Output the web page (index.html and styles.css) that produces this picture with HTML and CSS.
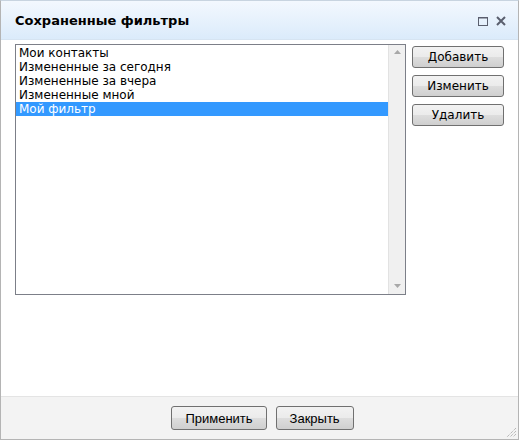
FILE: index.html
```html
<!DOCTYPE html>
<html lang="ru">
  <head>
    <meta charset="UTF-8" />
    <title>Сохраненные фильтры</title>
    <link rel="stylesheet" href="styles.css">
  </head>
  <body>
    <div class="window">
      <div class="titlebar">
        <span class="title">Сохраненные фильтры</span>
        <div class="title-tools">
          <svg width="10" height="10" viewBox="0 0 10 10"><rect x="0.5" y="1.5" width="9" height="8" fill="none" stroke="#5a5f6e" stroke-width="1"/><line x1="0" y1="2" x2="10" y2="2" stroke="#5a5f6e" stroke-width="1"/></svg>
          <svg width="10" height="10" viewBox="0 0 10 10"><path d="M1 1 L9 9 M9 1 L1 9" stroke="#5a5f6e" stroke-width="2"/></svg>
        </div>
      </div>

      <div class="content">
        <div class="listbox">
          <ul class="items">
            <li>Мои контакты</li>
            <li>Измененные за сегодня</li>
            <li>Измененные за вчера</li>
            <li>Измененные мной</li>
            <li class="selected">Мой фильтр</li>
          </ul>
          <div class="scrollbar">
            <svg width="7" height="4" viewBox="0 0 7 4"><path d="M0 4 L3.5 0 L7 4 Z" fill="#a8a8a8"/></svg>
            <svg width="7" height="4" viewBox="0 0 7 4"><path d="M0 0 L3.5 4 L7 0 Z" fill="#a8a8a8"/></svg>
          </div>
        </div>
        <div class="actions">
          <button class="btn">Добавить</button>
          <button class="btn">Изменить</button>
          <button class="btn">Удалить</button>
        </div>
      </div>

      <div class="footer">
        <button class="btn btn-footer">Применить</button>
        <button class="btn btn-footer">Закрыть</button>
        <svg class="grip" width="12" height="12" viewBox="0 0 12 12">
          <path d="M11 2 L2 11 M11 5 L5 11 M11 8 L8 11" stroke="#a0a0a0" stroke-width="1" stroke-dasharray="1 1"/>
        </svg>
      </div>
    </div>
  </body>
</html>
```

FILE: styles.css
```css
body {
  margin: 0;
  padding: 0;
  font-family: "DejaVu Sans", Verdana, sans-serif;
  background-color: #ffffff;
}

.window {
  position: relative;
  width: 519px;
  height: 440px;
  box-sizing: border-box;
  border: 1px solid #b4b4b4;
  border-top-color: #c8d4e0;
  display: flex;
  flex-direction: column;
  background-color: #ffffff;
}

.titlebar {
  height: 37px;
  padding: 1px 12px 0 14px;
  display: flex;
  align-items: center;
  justify-content: space-between;
  background: linear-gradient(#f3f8fe, #dbebfb);
  border-bottom: 1px solid #d6e4f2;
}

.title {
  font-weight: bold;
  font-size: 13px;
  color: #000000;
}

.title-tools {
  display: flex;
  gap: 8px;
  padding-top: 1px;
}

.content {
  flex: 1;
  display: flex;
  gap: 6px;
  padding: 4px 0 0 14px;
}

.listbox {
  width: 391px;
  height: 251px;
  box-sizing: border-box;
  border: 1px solid #7c7f88;
  display: flex;
}

.items {
  flex: 1;
  list-style: none;
  margin: 0;
  padding: 1px 0 0;
  font-size: 12px;
  line-height: 14px;
}

.items li {
  padding-left: 3px;
  color: #000000;
}

.items li.selected {
  background-color: #3399ff;
  color: #ffffff;
}

.scrollbar {
  width: 16px;
  background-color: #f0f0f0;
  border-left: 1px solid #e2e2e2;
  display: flex;
  flex-direction: column;
  align-items: center;
  justify-content: space-between;
  padding: 5px 0 6px;
}

.actions {
  display: flex;
  flex-direction: column;
  gap: 7px;
  padding-top: 2px;
}

.btn {
  width: 92px;
  height: 22px;
  padding: 0;
  font-family: "DejaVu Sans", Verdana, sans-serif;
  font-size: 12px;
  color: #000000;
  border: 1px solid #707070;
  border-radius: 3px;
  background: linear-gradient(#f2f2f2 0%, #ebebeb 50%, #dddddd 51%, #cfcfcf 100%);
  cursor: pointer;
}

.btn:hover {
  background: linear-gradient(#eaf6fd 0%, #d9f0fc 50%, #bee6fd 51%, #a7d9f5 100%);
}

.footer {
  height: 42px;
  border-top: 1px solid #e4e4e4;
  background-color: #f3f3f3;
  display: flex;
  align-items: center;
  justify-content: center;
  gap: 9px;
  padding-left: 6px;
}

.btn-footer {
  width: auto;
  height: 24px;
  padding: 0 13px;
  font-family: "Liberation Sans", Arial, sans-serif;
  font-size: 13px;
}

.grip {
  position: absolute;
  right: 1px;
  bottom: 1px;
}
```
